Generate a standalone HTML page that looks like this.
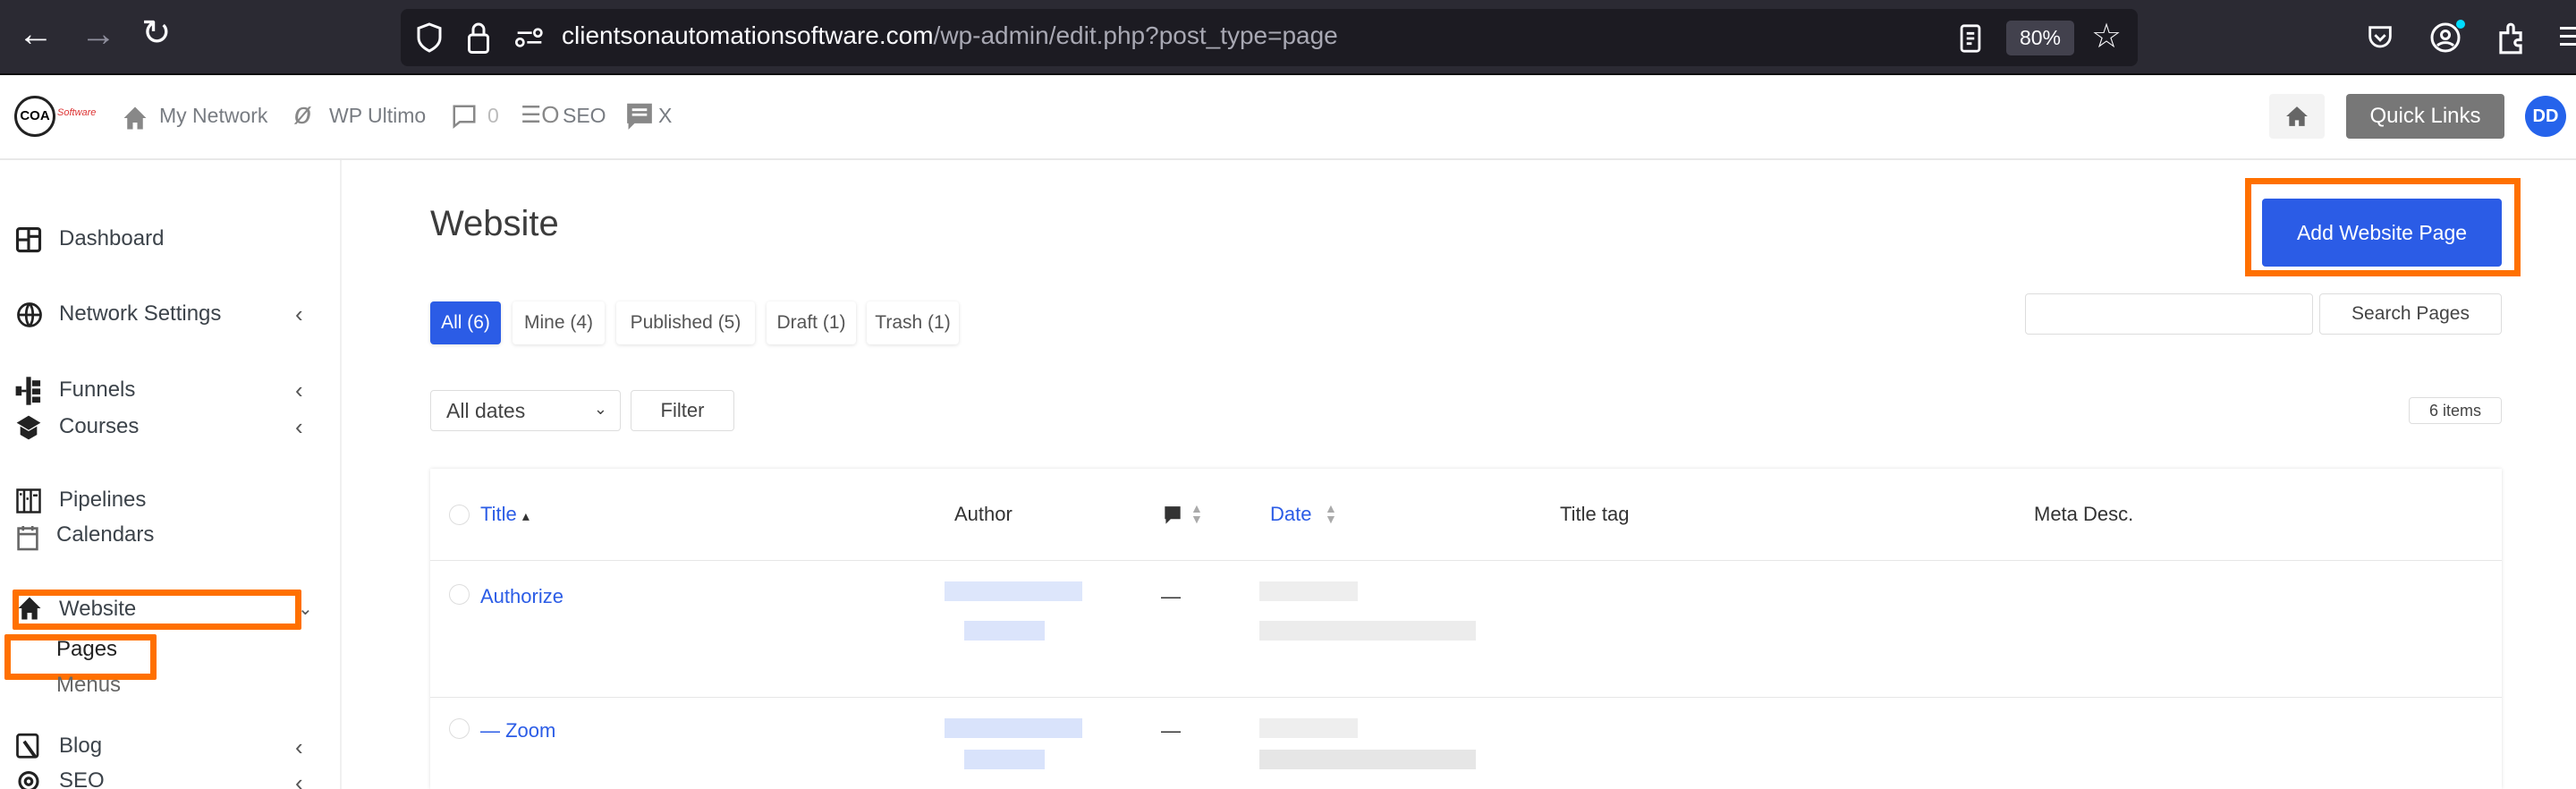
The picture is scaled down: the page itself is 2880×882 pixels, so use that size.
<!DOCTYPE html>
<html style="width:2880px;height:882px;overflow:hidden"><head><meta charset="utf-8"><style>
*{box-sizing:border-box;margin:0;padding:0}
body{width:2880px;height:882px;overflow:hidden;background:#fff;font-family:"Liberation Sans",sans-serif;position:relative}
.a{position:absolute}
.t{position:absolute;white-space:nowrap}
.side{font-size:24px;color:#3c434a}
.tab{position:absolute;top:337px;height:48px;border-radius:4px;background:#fff;box-shadow:0 1px 4px rgba(0,0,0,.12);font-size:21px;color:#555;line-height:48px;text-align:center}
.chev{position:absolute;left:330px;font-size:26px;color:#555}
.btn{position:absolute;border:1px solid #ddd;border-radius:4px;background:#fff;color:#444;text-align:center}
</style></head><body>
<div class="a" style="left:0;top:0;width:2880px;height:83px;background:#2b2a33"></div>
<div class="a" style="left:0;top:82px;width:2880px;height:2px;background:#0c0c0d"></div>
<div class="t" style="left:20px;top:16px;font-size:40px;color:#fbfbfe">←</div>
<div class="t" style="left:90px;top:16px;font-size:40px;color:#8f8f9d">→</div>
<div class="t" style="left:158px;top:14px;font-size:40px;color:#fbfbfe">↻</div>
<div class="a" style="left:448px;top:10px;width:1942px;height:64px;background:#1c1b22;border-radius:8px"></div>
<svg class="a" style="left:462px;top:24px" width="36" height="36" viewBox="0 0 24 24" fill="none" stroke="#fbfbfe" stroke-width="2"><path d="M12 2l8 3v7c0 5-4 8-8 10-4-2-8-5-8-10V5z"/></svg>
<svg class="a" style="left:520px;top:22px" width="30" height="40" viewBox="0 0 20 26" fill="none" stroke="#fbfbfe" stroke-width="2"><rect x="3" y="11" width="14" height="13" rx="2"/><path d="M6 11V7a4 4 0 018 0v4"/></svg>
<svg class="a" style="left:576px;top:28px" width="32" height="28" viewBox="0 0 24 20" fill="none" stroke="#fbfbfe" stroke-width="2"><circle cx="4" cy="14" r="3"/><path d="M10 14h12M2 6h12"/><circle cx="19" cy="6" r="3"/></svg>
<div class="t" style="left:628px;top:24px;font-size:28px;color:#fbfbfe">clientsonautomationsoftware.com<span style="color:#a8a8b3">/wp-admin/edit.php?post_type=page</span></div>
<svg class="a" style="left:2190px;top:26px" width="26" height="34" viewBox="0 0 18 24" fill="none" stroke="#fbfbfe" stroke-width="2"><rect x="2" y="2" width="14" height="20" rx="2"/><path d="M6 8h6M6 12h6M6 16h4"/></svg>
<div class="a" style="left:2243px;top:23px;width:76px;height:39px;background:#42414d;border-radius:5px;color:#fbfbfe;font-size:23px;text-align:center;line-height:39px">80%</div>
<div class="t" style="left:2338px;top:18px;font-size:38px;color:#fbfbfe">☆</div>
<svg class="a" style="left:2644px;top:25px" width="34" height="34" viewBox="0 0 24 24" fill="none" stroke="#fbfbfe" stroke-width="2"><path d="M4 4h16v7a8 8 0 01-16 0z"/><path d="M8 10l4 4 4-4"/></svg>
<svg class="a" style="left:2716px;top:23px" width="36" height="38" viewBox="0 0 24 24" fill="none" stroke="#fbfbfe" stroke-width="2"><circle cx="12" cy="12" r="10"/><circle cx="12" cy="10" r="3"/><path d="M6 18c3-3 9-3 12 0"/></svg>
<div class="a" style="left:2746px;top:22px;width:10px;height:10px;border-radius:5px;background:#00ddff"></div>
<svg class="a" style="left:2790px;top:24px" width="34" height="38" viewBox="0 0 20 24" fill="none" stroke="#fbfbfe" stroke-width="2"><path d="M3 8h5V4a2 2 0 014 0v4h5v5h-2a2 2 0 000 4h2v5H3z"/></svg>
<div class="a" style="left:2862px;top:30px;width:20px;height:3px;background:#fbfbfe;box-shadow:0 9px 0 #fbfbfe,0 18px 0 #fbfbfe"></div>

<div class="a" style="left:0;top:177px;width:2880px;height:2px;background:#e8e8e8"></div>
<div class="a" style="left:16px;top:107px;width:46px;height:46px;border:3px solid #222;border-radius:50%;font-size:15px;font-weight:bold;text-align:center;line-height:40px">COA</div>
<div class="t" style="left:64px;top:120px;font-size:11px;color:#d33;font-style:italic">Software</div>
<svg class="a" style="left:136px;top:117px" width="30" height="30" viewBox="0 0 24 24" fill="#888"><path d="M12 2L2 12h3v10h5v-6h4v6h5V12h3z"/></svg>
<div class="t" style="left:178px;top:116px;font-size:23px;color:#787c82">My Network</div>
<div class="t" style="left:328px;top:108px;font-size:34px;color:#888;font-style:italic">ø</div>
<div class="t" style="left:368px;top:116px;font-size:23px;color:#787c82">WP Ultimo</div>
<svg class="a" style="left:504px;top:114px" width="30" height="32" viewBox="0 0 24 24" fill="none" stroke="#888" stroke-width="2"><path d="M3 3h18v14H8l-5 4z"/></svg>
<div class="t" style="left:545px;top:116px;font-size:23px;color:#bbb">0</div>
<div class="t" style="left:582px;top:113px;font-size:26px;color:#888">☰O</div>
<div class="t" style="left:629px;top:116px;font-size:23px;color:#787c82">SEO</div>
<svg class="a" style="left:698px;top:113px" width="34" height="36" viewBox="0 0 24 26" fill="#888"><path d="M2 2h20v16H8l-5 5V18H2z"/><path d="M6 7h12M6 11h12" stroke="#fff" stroke-width="2"/></svg>
<div class="t" style="left:736px;top:116px;font-size:23px;color:#787c82">X</div>
<div class="a" style="left:2537px;top:105px;width:62px;height:50px;background:#f3f3f3;border-radius:4px"></div>
<svg class="a" style="left:2555px;top:118px" width="26" height="24" viewBox="0 0 24 22" fill="#666"><path d="M12 1L1 11h3v10h6v-6h4v6h6V11h3z"/></svg>
<div class="a" style="left:2623px;top:105px;width:177px;height:50px;background:#777;border-radius:4px;color:#fff;font-size:24px;text-align:center;line-height:50px">Quick Links</div>
<div class="a" style="left:2823px;top:107px;width:46px;height:46px;background:#2563eb;border-radius:50%;color:#fff;font-size:20px;font-weight:bold;text-align:center;line-height:46px">DD</div>

<div class="a" style="left:380px;top:179px;width:2px;height:703px;background:#f0f0f0"></div>
<svg class="a" style="left:17px;top:252px" width="30" height="32" viewBox="0 0 24 24" fill="none" stroke="#222" stroke-width="2.5"><rect x="2" y="2" width="20" height="20" rx="2"/><path d="M12 2v20M2 12h10M12 9h10"/></svg>
<div class="t side" style="left:66px;top:253px">Dashboard</div>
<svg class="a" style="left:18px;top:337px" width="30" height="30" viewBox="0 0 24 24" fill="none" stroke="#222" stroke-width="2.2"><circle cx="12" cy="12" r="10"/><path d="M2 12h20M12 2c4 4 4 16 0 20M12 2c-4 4-4 16 0 20"/></svg>
<div class="t side" style="left:66px;top:337px">Network Settings</div><div class="chev" style="top:336px">‹</div>
<svg class="a" style="left:16px;top:420px" width="32" height="34" viewBox="0 0 24 26" fill="#222"><rect x="1" y="9" width="5" height="8"/><rect x="10" y="1" width="4" height="24"/><rect x="15" y="4" width="7" height="5"/><rect x="15" y="11" width="7" height="5"/><rect x="15" y="18" width="7" height="5"/><rect x="6" y="12" width="4" height="2"/></svg>
<div class="t side" style="left:66px;top:422px">Funnels</div><div class="chev" style="top:421px">‹</div>
<svg class="a" style="left:16px;top:462px" width="32" height="32" viewBox="0 0 24 24" fill="#222"><path d="M12 2l10 6-10 6L2 8z"/><path d="M5 11v7l7 4 7-4v-7l-7 4z"/></svg>
<div class="t side" style="left:66px;top:463px">Courses</div><div class="chev" style="top:462px">‹</div>
<svg class="a" style="left:17px;top:545px" width="30" height="30" viewBox="0 0 24 24" fill="none" stroke="#222" stroke-width="2"><rect x="2" y="2" width="20" height="20"/><path d="M8 2v20M14 2v20M4 6h2M10 10h2M16 7h4"/></svg>
<div class="t side" style="left:66px;top:545px">Pipelines</div>
<svg class="a" style="left:18px;top:585px" width="26" height="32" viewBox="0 0 20 24" fill="none" stroke="#666" stroke-width="2"><rect x="2" y="4" width="16" height="18"/><path d="M2 9h16M6 2v4M14 2v4"/></svg>
<div class="t side" style="left:63px;top:584px">Calendars</div>
<svg class="a" style="left:18px;top:664px" width="30" height="32" viewBox="0 0 24 24" fill="#222"><path d="M12 2L2 12h3v10h5v-6h4v6h5V12h3z"/></svg>
<div class="t side" style="left:66px;top:667px">Website</div>
<div class="t" style="left:333px;top:668px;font-size:20px;color:#555">⌄</div>
<div class="a" style="left:14px;top:659px;width:323px;height:45px;border:7px solid #ff7000;border-radius:2px"></div>
<div class="t side" style="left:63px;top:712px;color:#222">Pages</div>
<div class="a" style="left:5px;top:709px;width:170px;height:51px;border:7px solid #ff7000;border-radius:2px"></div>
<div class="t side" style="left:63px;top:752px;color:#666">Menus</div>
<svg class="a" style="left:17px;top:818px" width="30" height="34" viewBox="0 0 24 26" fill="none" stroke="#222" stroke-width="2.2"><rect x="2" y="2" width="18" height="20" rx="2"/><path d="M8 8l10 14" stroke-width="3"/></svg>
<div class="t side" style="left:66px;top:820px">Blog</div><div class="chev" style="top:820px">‹</div>
<svg class="a" style="left:17px;top:856px" width="30" height="30" viewBox="0 0 24 24" fill="none" stroke="#222" stroke-width="2.5"><circle cx="12" cy="14" r="8"/><circle cx="12" cy="14" r="3"/></svg>
<div class="t side" style="left:66px;top:859px">SEO</div><div class="chev" style="top:860px">‹</div>

<div class="t" style="left:481px;top:228px;font-size:40px;color:#3c3c3c">Website</div>
<div class="a" style="left:2510px;top:199px;width:308px;height:110px;border:7px solid #ff7000"></div>
<div class="a" style="left:2529px;top:222px;width:268px;height:76px;background:#2b5ce6;border-radius:4px;color:#fff;font-size:23px;text-align:center;line-height:76px">Add Website Page</div>

<div class="tab" style="left:481px;width:79px;background:#2b5ce6;color:#fff">All (6)</div>
<div class="tab" style="left:573px;width:103px">Mine (4)</div>
<div class="tab" style="left:689px;width:155px">Published (5)</div>
<div class="tab" style="left:857px;width:100px">Draft (1)</div>
<div class="tab" style="left:969px;width:103px">Trash (1)</div>

<div class="btn" style="left:2264px;top:328px;width:322px;height:46px"></div>
<div class="btn" style="left:2593px;top:328px;width:204px;height:46px;font-size:21px;line-height:44px">Search Pages</div>

<div class="btn" style="left:481px;top:436px;width:213px;height:46px;font-size:23px;line-height:44px;text-align:left;padding-left:17px">All dates<span style="position:absolute;right:14px;top:-2px;font-size:18px">⌄</span></div>
<div class="btn" style="left:705px;top:436px;width:116px;height:46px;font-size:22px;line-height:44px">Filter</div>
<div class="btn" style="left:2693px;top:444px;width:104px;height:30px;font-size:18px;line-height:28px">6 items</div>

<div class="a" style="left:481px;top:524px;width:2316px;height:358px;background:#fff;box-shadow:0 0 4px rgba(0,0,0,.12)"></div>
<div class="a" style="left:481px;top:626px;width:2316px;height:1px;background:#e6e6e6"></div>
<div class="a" style="left:481px;top:779px;width:2316px;height:1px;background:#e6e6e6"></div>
<div class="a" style="left:502px;top:564px;width:23px;height:23px;border:1px solid #ddd;border-radius:50%"></div>
<div class="t" style="left:537px;top:562px;font-size:22px;color:#2b5ce6">Title <span style="color:#333;font-size:16px">▴</span></div>
<div class="t" style="left:1067px;top:562px;font-size:22px;color:#333">Author</div>
<svg class="a" style="left:1300px;top:564px" width="22" height="26" viewBox="0 0 20 24" fill="#333"><path d="M2 2h16v13H8l-5 5v-5H2z"/></svg>
<div class="t" style="left:1331px;top:562px;font-size:14px;color:#aaa;line-height:12px">▲<br>▼</div>
<div class="t" style="left:1420px;top:562px;font-size:22px;color:#2b5ce6">Date</div>
<div class="t" style="left:1481px;top:562px;font-size:14px;color:#aaa;line-height:12px">▲<br>▼</div>
<div class="t" style="left:1744px;top:562px;font-size:22px;color:#333">Title tag</div>
<div class="t" style="left:2274px;top:562px;font-size:22px;color:#333">Meta Desc.</div>

<div class="a" style="left:502px;top:653px;width:23px;height:23px;border:1px solid #ddd;border-radius:50%"></div>
<div class="t" style="left:537px;top:654px;font-size:22px;color:#2b5ce6">Authorize</div>
<div class="a" style="left:1056px;top:650px;width:154px;height:22px;background:#dde6fb"></div>
<div class="a" style="left:1078px;top:694px;width:90px;height:22px;background:#dbe4fb"></div>
<div class="t" style="left:1298px;top:654px;font-size:22px;color:#333">—</div>
<div class="a" style="left:1408px;top:650px;width:110px;height:22px;background:#eee"></div>
<div class="a" style="left:1408px;top:694px;width:242px;height:22px;background:#ececec"></div>

<div class="a" style="left:502px;top:803px;width:23px;height:23px;border:1px solid #ddd;border-radius:50%"></div>
<div class="t" style="left:537px;top:804px;font-size:22px;color:#2b5ce6">— Zoom</div>
<div class="a" style="left:1056px;top:803px;width:154px;height:22px;background:#d9e3fb"></div>
<div class="a" style="left:1078px;top:838px;width:90px;height:22px;background:#d9e3fb"></div>
<div class="t" style="left:1298px;top:804px;font-size:22px;color:#333">—</div>
<div class="a" style="left:1408px;top:803px;width:110px;height:22px;background:#eee"></div>
<div class="a" style="left:1408px;top:838px;width:242px;height:22px;background:#e6e6e6"></div>
</body></html>
